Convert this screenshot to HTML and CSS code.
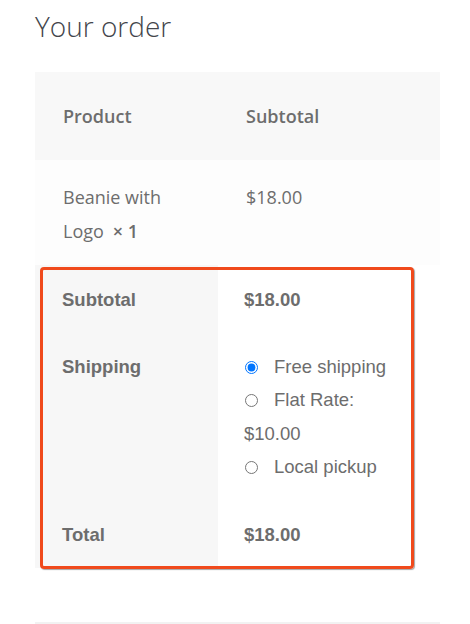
FILE: index.html
```html
<!DOCTYPE html>
<html lang="en">
<head>
<meta charset="utf-8">
<title>Your order</title>
<link rel="stylesheet" href="styles.css">
</head>
<body>
<div class="page">
  <h3 class="title">Your order</h3>
  <div class="order">
    <table class="review">
      <colgroup>
        <col class="col1">
        <col class="col2">
      </colgroup>
      <thead>
        <tr>
          <th>Product</th>
          <th class="c2">Subtotal</th>
        </tr>
      </thead>
      <tbody>
        <tr class="item">
          <td class="c1"><span class="name">Beanie with</span> <span class="name">Logo</span><strong class="qty">×&nbsp;1</strong></td>
          <td class="c2">$18.00</td>
        </tr>
      </tbody>
      <tfoot>
        <tr class="r-sub">
          <th class="f1">Subtotal</th>
          <td class="f2"><strong>$18.00</strong></td>
        </tr>
        <tr class="r-ship">
          <th class="f1">Shipping</th>
          <td class="f2">
            <ul class="methods">
              <li><input type="radio" name="ship" checked><label>Free shipping</label></li>
              <li><input type="radio" name="ship"><label>Flat Rate: $10.00</label></li>
              <li><input type="radio" name="ship"><label>Local pickup</label></li>
            </ul>
          </td>
        </tr>
        <tr class="r-total">
          <th class="f1">Total</th>
          <td class="f2"><strong>$18.00</strong></td>
        </tr>
      </tfoot>
    </table>
    <div class="highlight"></div>
  </div>
  <div class="rule"></div>
</div>
</body>
</html>
```

FILE: styles.css
```css
html, body {
  margin: 0;
  padding: 0;
  background: #ffffff;
}
.page {
  padding: 0 30px 0 35px;
  color: #6d6d6d;
  font-family: "Open Sans", "Noto Sans", sans-serif;
}
.title {
  margin: 0;
  padding-top: 7px;
  height: 72px;
  box-sizing: border-box;
  font-size: 28px;
  font-weight: 300;
  line-height: 38px;
  color: #43454b;
}
.order {
  position: relative;
}
.review {
  width: 405px;
  table-layout: fixed;
  border-collapse: collapse;
  border-spacing: 0;
}
.col1 { width: 183px; }
.col2 { width: 222px; }
.review thead th {
  background: #f8f8f8;
  height: 88px;
  padding: 0 0 0 28px;
  text-align: left;
  font-size: 18px;
  font-weight: 600;
  box-sizing: border-box;
}
.review .item td {
  background: #fdfdfd;
  vertical-align: top;
  padding: 20px 28px 17px 28px;
  font-size: 18px;
  line-height: 34px;
}
.review .item td.c1 { padding-right: 20px; }
.qty {
  display: inline-block;
  font-weight: 600;
  margin-left: 9px;
}
.review tfoot th,
.review tfoot td {
  font-family: "Liberation Sans", Arial, sans-serif;
  font-size: 18.5px;
  line-height: 33.5px;
  text-align: left;
  vertical-align: top;
  padding: 18px 10px 14px 27px;
}
.review tfoot th {
  background: #f7f7f7;
  font-weight: bold;
}
.review tfoot td {
  background: #ffffff;
  padding-left: 26px;
  padding-right: 40px;
}
.review .r-ship th,
.review .r-ship td { padding-top: 19px; padding-bottom: 17px; }
.review .r-total th,
.review .r-total td { padding-top: 17px; padding-bottom: 17px; }
.methods {
  list-style: none;
  margin: 0;
  padding: 0;
}
.methods input {
  width: 13px;
  height: 13px;
  margin: 0 16px 0 1px;
  vertical-align: -1px;
}
.highlight {
  position: absolute;
  left: 5px;
  top: 195px;
  width: 374px;
  height: 302px;
  box-sizing: border-box;
  border: 3.5px solid #f04a1c;
  border-radius: 4px;
  box-shadow: 1px 1px 1px rgba(0, 0, 0, 0.35);
  pointer-events: none;
}
.rule {
  margin-top: 54px;
  width: 405px;
  height: 2px;
  background: #f2f2f2;
}
```
